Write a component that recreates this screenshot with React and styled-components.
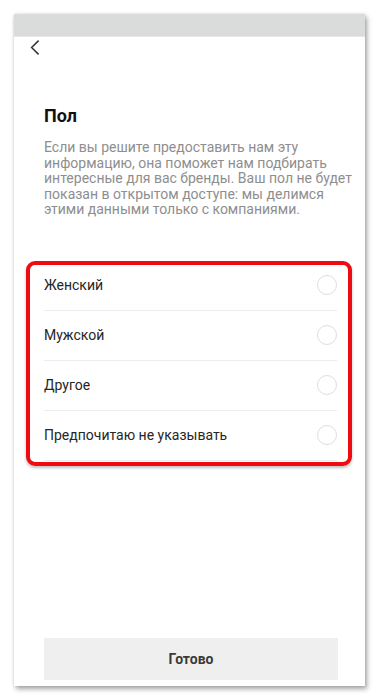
import React from "react";
import styled, { createGlobalStyle } from "styled-components";

const GlobalStyle = createGlobalStyle`
  html, body {
    margin: 0;
    padding: 0;
    background: #fff;
  }
  body {
    font-family: Roboto, "Noto Sans", Arial, sans-serif;
  }
`;

const options = ["Женский", "Мужской", "Другое", "Предпочитаю не указывать"];

function App() {
  return (
    <>
      <GlobalStyle />
      <Page>
        <Phone>
          <StatusBar />
          <BackButton aria-label="Назад">
            <svg width="10" height="15" viewBox="0 0 10 15">
              <path d="M8.6 0.6 L1.6 7.5 L8.6 14.4" fill="none" stroke="#333" strokeWidth="1.5" />
            </svg>
          </BackButton>
          <Title>Пол</Title>
          <Description>
            Если вы решите предоставить нам эту информацию, она поможет нам подбирать
            интересные для вас бренды. Ваш пол не будет показан в открытом доступе: мы
            делимся этими данными только с компаниями.
          </Description>
          <OptionList>
            {options.map((o) => (
              <Option key={o}>
                <span>{o}</span>
                <Radio />
              </Option>
            ))}
            <Highlight />
          </OptionList>
          <Spacer />
          <DoneButton>Готово</DoneButton>
        </Phone>
      </Page>
    </>
  );
}

export default App;

const Page = styled.div`
  width: 380px;
  height: 700px;
  padding: 14px 0 0 14px;
  box-sizing: border-box;
`;

const Phone = styled.div`
  width: 351px;
  height: 672px;
  background: #fff;
  display: flex;
  flex-direction: column;
  box-shadow: 2px 3px 5px rgba(0, 0, 0, 0.35), 0 0 3px rgba(0, 0, 0, 0.12);
`;

const StatusBar = styled.div`
  height: 23px;
  background: #dadbdb;
  border-bottom: 1px solid #e6e7e7;
  box-sizing: border-box;
`;

const BackButton = styled.div`
  height: 16px;
  margin: 2px 0 0 16px;
  display: flex;
  align-items: center;
`;

const Title = styled.h1`
  margin: 50px 0 0 30px;
  font-size: 18px;
  line-height: 22px;
  font-weight: 700;
  color: #111;
`;

const Description = styled.p`
  margin: 13px 10px 0 30px;
  font-size: 14px;
  line-height: 15.6px;
  color: #8e8e8e;
`;

const OptionList = styled.div`
  position: relative;
  margin: 43px 28px 0 30px;
`;

const Option = styled.div`
  height: 49px;
  display: flex;
  align-items: center;
  justify-content: space-between;
  font-size: 14px;
  color: #262626;
  border-bottom: 1px solid #ececec;

  &:nth-last-of-type(1) {
    border-bottom: none;
  }
`;

const Radio = styled.div`
  width: 20px;
  height: 20px;
  border-radius: 50%;
  border: 1px solid #dedede;
  box-sizing: border-box;
`;

const Highlight = styled.div`
  position: absolute;
  top: 0;
  left: -18px;
  right: -15px;
  bottom: -5px;
  border: 4px solid #ef0b12;
  border-radius: 9px;
  box-shadow: 0 2px 3px rgba(0, 0, 0, 0.25);
  pointer-events: none;
`;

const Spacer = styled.div`
  flex: 1;
`;

const DoneButton = styled.button`
  margin: 0 0 6px 30px;
  width: 294px;
  height: 42px;
  border: none;
  background: #efefef;
  font-family: Roboto, Arial, sans-serif;
  font-size: 14px;
  font-weight: 700;
  color: #3a3a3a;
`;
